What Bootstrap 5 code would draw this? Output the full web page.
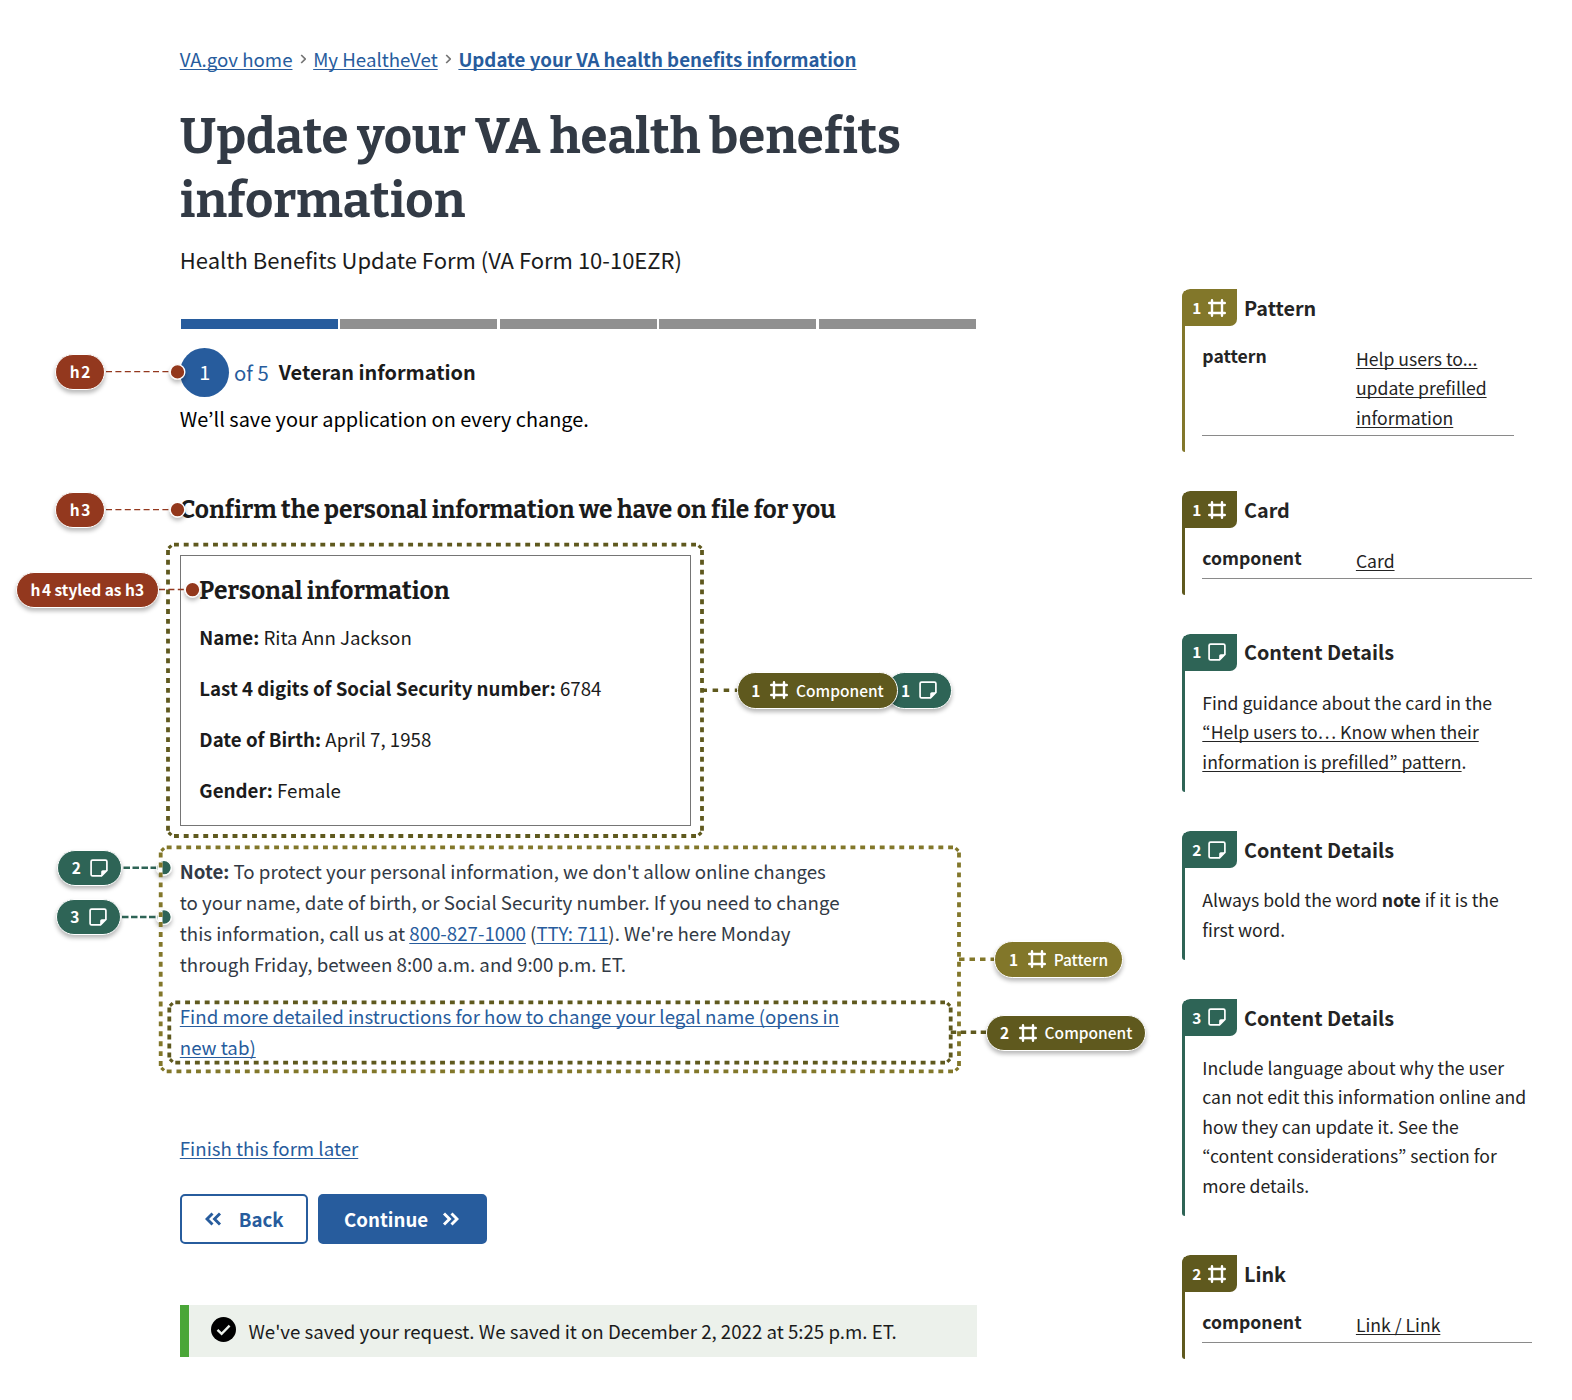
<!DOCTYPE html>
<html lang="en">
<head>
<meta charset="utf-8">
<meta name="viewport" content="width=device-width, initial-scale=1">
<title>Update your VA health benefits information</title>
<link href="https://cdn.jsdelivr.net/npm/bootstrap@5.3.0/dist/css/bootstrap.min.css" rel="stylesheet">
<style>
  :root { --va-blue:#275c9d; --va-ink:#1b1b1b; --va-slate:#323a45; --ann-red:#93381e; --ann-green:#2e6456; --ann-olive:#5f591e; --ann-gold:#82772a; }
  body { font-family:"Noto Sans CJK KR","Noto Sans",sans-serif; font-size:18.68px; line-height:30px; color:var(--va-ink); background:#fff; height:1400px; overflow:hidden; }
  a { color:var(--va-blue); text-decoration:underline; text-decoration-thickness:1px; text-underline-offset:2px; text-decoration-skip-ink:none; }
  .form-col { width:1182.3px; padding:43.5px 0 0 179.8px; }
  .form-col > * { width:797px; }
  .crumbs { gap:7.1px; }
  .crumbs svg { width:6.5px; height:10px; margin-top:1px; }
  h1, h2, h3 { font-family:Bitter,"DejaVu Serif Condensed",serif; font-weight:700; margin:0; }
  h1 { font-size:49.1px; line-height:64px; color:var(--va-slate); margin-top:31.2px; }
  .form-sub { font-size:22px; margin-top:11.2px; }
  .seg-bar { gap:2.4px; margin-top:44.7px; padding:0 1px; }
  .seg-bar div { height:10.2px; background:#909090; }
  .seg-bar .is-done { background:var(--va-blue); }
  .step-head { margin-top:19.4px; height:49.3px; font-size:19.9px; padding-left:.3px; }
  .step-no { width:49.3px; height:49.3px; background:var(--va-blue); color:#fff; padding-bottom:.6px; }
  .step-of { color:var(--va-blue); font-size:20.3px; margin:0 10px 1px 4.600px; }
  .step-name { margin-bottom:1px; }
  .save-line { font-size:19.9px; margin-top:6.3px; color:#000; }
  h2, h3 { font-size:24.57px; line-height:32px; }
  h2 { margin-top:60px; }
  .form-col > .info-card { width:511.7px; height:270.7px; margin-top:29.2px; border:1.2px solid #757575; border-radius:0; padding:18.8px 18.5px; }
  .info-card p { margin:0 0 20.9px; }
  .info-card h3 { margin-bottom:15.3px; }
  .form-col > .note-text { width:664px; margin:28.9px 0 0; line-height:31.1px; color:var(--va-slate); }
  .form-col > .more-link { width:664px; margin:21.2px 0 0; line-height:31px; }
  .later { margin-top:71.2px; }
  .form-actions { margin-top:30.9px; gap:10px; }
  .form-actions .btn { height:49.5px; border-radius:5px; font-size:18.67px; font-weight:700; border:2.5px solid var(--va-blue); padding:0; line-height:30px; }
  .form-actions .btn-back { width:128.7px; color:var(--va-blue); background:#fff; gap:17px; }
  .form-actions .btn-next { width:168.7px; color:#fff; background:var(--va-blue); gap:14px; padding-right:2.5px; }
  .saved-box { margin-top:61.6px; height:51.7px; background:#ecf1eb; border-left:9.9px solid #4aa638; padding-left:22px; gap:12.6px; }
  .side-col { padding-top:289.4px; width:350px; font-size:17.6px; line-height:29.5px; color:#242424; }
  .side-col a { color:#242424; }
  .spec { position:relative; margin-bottom:39px; padding:0 0 15.6px 20px; overflow:hidden; border-top-left-radius:8px; }
  .spec::before { content:""; position:absolute; left:0; top:0; bottom:0; width:2.7px; background:var(--tone); border-radius:0 0 0 3px; }
  .spec-head { margin-left:-20px; margin-bottom:17.2px; height:37px; font-size:19.8px; font-weight:700; }
  .spec-tag { width:54.4px; height:37px; background:var(--tone); color:#fff; border-radius:8px 0 7px 0; font-size:15.4px; padding-left:10px; gap:7px; margin-right:7.3px; }
  .spec-row { border-bottom:1.2px solid #8a8a8a; padding-bottom:3.4px; }
  .spec-short { margin-right:18.700px; }
  .spec-row b { width:153.6px; margin-top:-2.7px; }
  .spec-row a { margin:.400px 0 -.400px; }
  .spec-body { padding-right:2px; }
  .tone-gold { --tone:var(--ann-gold); } .tone-olive { --tone:var(--ann-olive); } .tone-green { --tone:var(--ann-green); } .tone-red { --tone:var(--ann-red); }
  .glyph { width:18px; height:18px; flex:none; }
  .overlay { position:absolute; left:0; top:0; pointer-events:none; }
  .pin { position:absolute; height:36.4px; border-radius:18.2px; background:var(--tone); border:1.3px solid #fff; color:#fff; font-size:15.5px; line-height:20px; box-shadow:0 3px 4px rgba(0,0,0,.28); white-space:nowrap; }
  .pin b, .pin span { margin-bottom:1.800px; }
  .pin b:first-letter { margin-right:1.5px; }
  .pin-h2 { left:55px; top:353.5px; width:50.2px; } .pin-h3 { left:55px; top:491.5px; width:50.2px; } .pin-h4 { left:16px; top:571.6px; width:142.6px; }
  .pin-n2 { left:57.2px; top:849.6px; width:65.2px; } .pin-n3 { left:55.8px; top:898.9px; width:65.2px; }
  .pin-c1 { left:737.2px; top:672.3px; width:160.7px; z-index:2; } .pin-n1 { left:886px; top:672.3px; width:66px; }
  .pin-p1 { left:994.2px; top:941.3px; width:128.7px; } .pin-c2 { left:985.8px; top:1014.5px; width:160.7px; }
  .pin-wide { gap:8px; } .pin-note { gap:7.6px; } .pin span { font-weight:500; }
</style>
<script src="https://cdn.jsdelivr.net/npm/bootstrap@5.3.0/dist/js/bootstrap.bundle.min.js"></script>
</head>
<body>
<svg class="d-none">
  <symbol id="g-frame" viewBox="0 0 18 18"><path d="M4 1.200v15.600M14 1.200v15.600M1.200 4h15.600M1.200 14h15.600" fill="none" stroke="#fff" stroke-width="2.400" stroke-linecap="round"/></symbol>
  <symbol id="g-note" viewBox="0 0 18 18"><path d="M2.6 1.100h12.8q1.500 0 1.500 1.500V11.500l-5.400 5.400H2.600Q1.100 16.900 1.100 15.400V2.600Q1.100 1.100 2.600 1.100Z" fill="none" stroke="#fff" stroke-width="1.700"/><path d="M17.200 11.200 11.200 17.200V12.800q0-1.600 1.600-1.600Z" fill="#fff"/></symbol>
  <symbol id="g-chev" viewBox="0 0 6.500 10"><path d="M1.200 1 5.200 5 1.200 9" fill="none" stroke="#757575" stroke-width="1.700"/></symbol>
</svg>

<div class="d-flex">
  <main class="form-col flex-shrink-0">
    <nav class="crumbs d-flex align-items-center">
      <a href="#">VA.gov home</a><svg><use href="#g-chev"/></svg>
      <a href="#">My HealtheVet</a><svg><use href="#g-chev"/></svg>
      <a href="#" class="fw-bold">Update your VA health benefits information</a>
    </nav>
    <h1>Update your VA health benefits information</h1>
    <div class="form-sub">Health Benefits Update Form (VA Form 10-10EZR)</div>
    <div class="seg-bar d-flex">
      <div class="flex-fill is-done"></div><div class="flex-fill"></div><div class="flex-fill"></div><div class="flex-fill"></div><div class="flex-fill"></div>
    </div>
    <div class="step-head d-flex align-items-center">
      <span class="step-no rounded-circle d-flex align-items-center justify-content-center">1</span>
      <span class="step-of">of 5</span><b class="step-name">Veteran information</b>
    </div>
    <div class="save-line">We’ll save your application on every change.</div>
    <h2>Confirm the personal information we have on file for you</h2>
    <section class="card info-card">
      <h3>Personal information</h3>
      <p><b>Name:</b> Rita Ann Jackson</p>
      <p><b>Last 4 digits of Social Security number:</b> 6784</p>
      <p><b>Date of Birth:</b> April 7, 1958</p>
      <p><b>Gender:</b> Female</p>
    </section>
    <p class="note-text"><b>Note:</b> To protect your personal information, we don't allow online changes to your name, date of birth, or Social Security number. If you need to change this information, call us at <a href="#">800-827-1000</a> (<a href="#">TTY: 711</a>). We're here Monday through Friday, between 8:00 a.m. and 9:00 p.m. ET.</p>
    <p class="more-link"><a href="#">Find more detailed instructions for how to change your legal name (opens in new tab)</a></p>
    <div class="later"><a href="#">Finish this form later</a></div>
    <div class="form-actions d-flex">
      <button class="btn btn-back d-flex align-items-center justify-content-center"><svg width="17" height="14" viewBox="0 0 17 14"><path d="M7.500 1.500 2 7l5.500 5.500M15 1.500 9.500 7l5.500 5.500" fill="none" stroke="#275c9d" stroke-width="2.900"/></svg>Back</button>
      <button class="btn btn-next d-flex align-items-center justify-content-center">Continue<svg width="17" height="14" viewBox="0 0 17 14"><path d="M2 1.500 7.500 7 2 12.500M9.500 1.500 15 7l-5.500 5.500" fill="none" stroke="#fff" stroke-width="2.900"/></svg></button>
    </div>
    <div class="saved-box d-flex align-items-center">
      <svg width="25" height="25" viewBox="0 0 25 25" class="flex-shrink-0 mb-1"><circle cx="12.500" cy="12.500" r="12.500"/><path d="M6.500 12.800 10.600 16.800 18.600 8.700" fill="none" stroke="#ecf1eb" stroke-width="2.400"/></svg>
      <span>We've saved your request. We saved it on December 2, 2022 at 5:25 p.m. ET.</span>
    </div>
  </main>

  <aside class="side-col flex-shrink-0">
    <section class="spec tone-gold">
      <div class="spec-head d-flex align-items-center"><span class="spec-tag d-flex align-items-center">1<svg class="glyph"><use href="#g-frame"/></svg></span>Pattern</div>
      <div class="spec-row spec-short d-flex"><b class="flex-shrink-0">pattern</b><a href="#">Help users to... update prefilled information</a></div>
    </section>
    <section class="spec tone-olive">
      <div class="spec-head d-flex align-items-center"><span class="spec-tag d-flex align-items-center">1<svg class="glyph"><use href="#g-frame"/></svg></span>Card</div>
      <div class="spec-row d-flex"><b class="flex-shrink-0">component</b><a href="#">Card</a></div>
    </section>
    <section class="spec tone-green">
      <div class="spec-head d-flex align-items-center"><span class="spec-tag d-flex align-items-center">1<svg class="glyph"><use href="#g-note"/></svg></span>Content Details</div>
      <div class="spec-body">Find guidance about the card in the <a href="#">“Help users to… Know when their information is prefilled” pattern</a>.</div>
    </section>
    <section class="spec tone-green">
      <div class="spec-head d-flex align-items-center"><span class="spec-tag d-flex align-items-center">2<svg class="glyph"><use href="#g-note"/></svg></span>Content Details</div>
      <div class="spec-body">Always bold the word <b>note</b> if it is the first word.</div>
    </section>
    <section class="spec tone-green">
      <div class="spec-head d-flex align-items-center"><span class="spec-tag d-flex align-items-center">3<svg class="glyph"><use href="#g-note"/></svg></span>Content Details</div>
      <div class="spec-body">Include language about why the user can not edit this information online and how they can update it. See the “content considerations” section for more details.</div>
    </section>
    <section class="spec tone-olive">
      <div class="spec-head d-flex align-items-center"><span class="spec-tag d-flex align-items-center">2<svg class="glyph"><use href="#g-frame"/></svg></span>Link</div>
      <div class="spec-row d-flex"><b class="flex-shrink-0">component</b><a href="#">Link / Link</a></div>
    </section>
  </aside>
</div>

<!-- Annotation layer: outlines, connectors and end dots -->
<svg class="overlay" width="1572" height="1400" viewBox="0 0 1572 1400" fill="none">
  <defs><filter id="soft" x="-50%" y="-50%" width="200%" height="200%"><feDropShadow dx="0" dy="3" stdDeviation="2" flood-opacity=".28"/></filter></defs>
  <!-- note anchors -->
  <g stroke="#2e6456" stroke-width="2.400" stroke-dasharray="6.500 2.500"><path d="M123.500 867.700H158M122 917H158"/></g>
  <g filter="url(#soft)" fill="#2e6456" stroke="#fff" stroke-width="1.300"><circle cx="164" cy="867.700" r="7.300"/><circle cx="164" cy="917" r="7.300"/></g>
  <path d="M158.500 863q-2 4.700 0 9.400l4 2v-13.400ZM158.500 912.300q-2 4.700 0 9.400l4 2v-13.400Z" fill="#fff"/>
  <!-- card outline -->
  <g stroke="#5f591e" stroke-width="3.800">
    <path d="M174 544.700H696M174 836H696" stroke-dasharray="4.900 4.857"/>
    <path d="M168 550V830.700M702 550V830.700" stroke-dasharray="4.900 4.950"/>
    <path d="M168.600 548.200l2.800-2.600M701.400 548.200l-2.800-2.600M168.600 832.500l2.800 2.600M701.400 832.500l-2.800 2.600" stroke-width="3.200"/>
    <path d="M702 690.300H738" stroke-width="3.500" stroke-dasharray="5.500 5.600" stroke-dashoffset="0.500"/>
  </g>
  <!-- pattern outline -->
  <g stroke="#82772a" stroke-width="3.800">
    <path d="M166.700 847.300H953M166.700 1071.300H953" stroke-dasharray="4.900 4.868"/>
    <path d="M160.700 852.600V1066M959 852.600V1066" stroke-dasharray="4.900 5.029"/>
    <path d="M161.300 850.800l2.800-2.600M958.400 850.800l-2.800-2.600M161.300 1067.800l2.800 2.600M958.400 1067.800l-2.800 2.600" stroke-width="3.200"/>
    <path d="M959 959.300H994" stroke-width="3.500" stroke-dasharray="5.500 5" />
  </g>
  <!-- link outline -->
  <g stroke="#5f591e" stroke-width="3.800">
    <path d="M175.300 1002.300H945M175.300 1062.700H945" stroke-dasharray="4.900 4.908"/>
    <path d="M169.300 1007.600V1057.400M950.700 1007.600V1057.400" stroke-dasharray="4.900 4.080"/>
    <path d="M169.900 1005.800l2.800-2.600M950.100 1005.800l-2.800-2.600M169.900 1059.200l2.800 2.600M950.100 1059.200l-2.800 2.600" stroke-width="3.200"/>
    <path d="M950.700 1032.300H987" stroke-width="3.500" stroke-dasharray="5.500 4.500"/>
  </g>
  <!-- heading anchors -->
  <g stroke="#93381e" stroke-width="1.300" stroke-dasharray="6 3.400"><path d="M106 371.700H171M106 509.600H171M159 589.500H186"/></g>
  <g filter="url(#soft)" fill="#93381e" stroke="#fff" stroke-width="1.300"><circle cx="177.500" cy="371.900" r="7.300"/><circle cx="177.500" cy="509.700" r="7.300"/><circle cx="192.500" cy="589.700" r="7.300"/></g>
</svg>
<div class="pin pin-h2 tone-red d-flex align-items-center justify-content-center"><b>h2</b></div>
<div class="pin pin-h3 tone-red d-flex align-items-center justify-content-center"><b>h3</b></div>
<div class="pin pin-h4 tone-red d-flex align-items-center justify-content-center"><b>h4 styled as h3</b></div>
<div class="pin pin-n2 pin-note tone-green d-flex align-items-center justify-content-center"><b>2</b><svg class="glyph"><use href="#g-note"/></svg></div>
<div class="pin pin-n3 pin-note tone-green d-flex align-items-center justify-content-center"><b>3</b><svg class="glyph"><use href="#g-note"/></svg></div>
<div class="pin pin-n1 pin-note tone-green d-flex align-items-center justify-content-center"><b>1</b><svg class="glyph"><use href="#g-note"/></svg></div>
<div class="pin pin-c1 pin-wide tone-olive d-flex align-items-center justify-content-center"><b>1</b><svg class="glyph"><use href="#g-frame"/></svg><span>Component</span></div>
<div class="pin pin-p1 pin-wide tone-gold d-flex align-items-center justify-content-center"><b>1</b><svg class="glyph"><use href="#g-frame"/></svg><span>Pattern</span></div>
<div class="pin pin-c2 pin-wide tone-olive d-flex align-items-center justify-content-center"><b>2</b><svg class="glyph"><use href="#g-frame"/></svg><span>Component</span></div>
</body>
</html>
